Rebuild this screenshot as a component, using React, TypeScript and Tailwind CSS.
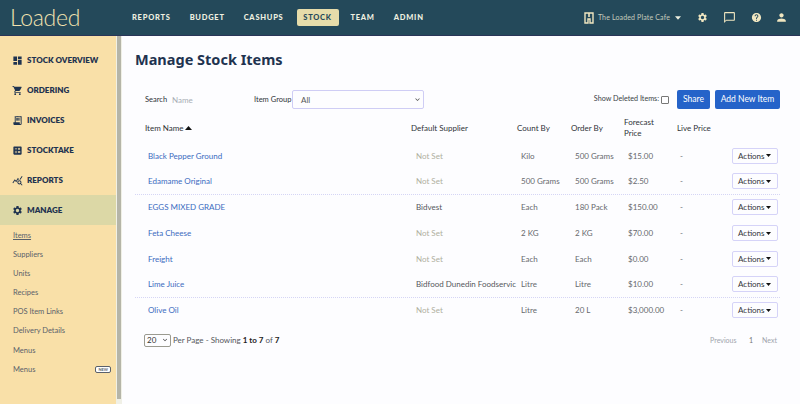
import { MdDashboard, MdShoppingCart, MdSettings, MdChatBubbleOutline, MdHelp, MdPerson, MdCalculate, MdReceiptLong, MdQueryStats, MdKeyboardArrowDown } from "react-icons/md";

const TOP_NAV = [
  { label: "REPORTS", cls: "ml-[8px]" },
  { label: "BUDGET", cls: "ml-[19px]" },
  { label: "CASHUPS", cls: "ml-[19px]" },
  { label: "STOCK", cls: "ml-[13px]" },
  { label: "TEAM", cls: "ml-[12px]" },
  { label: "ADMIN", cls: "ml-[19px]" },
];

const SIDE_NAV = [
  { label: "STOCK OVERVIEW", icon: MdDashboard },
  { label: "ORDERING", icon: MdShoppingCart },
  { label: "INVOICES", icon: MdReceiptLong },
  { label: "STOCKTAKE", icon: MdCalculate },
  { label: "REPORTS", icon: MdQueryStats },
];

const SUB_NAV = ["Items", "Suppliers", "Units", "Recipes", "POS Item Links", "Delivery Details", "Menus"];

const ROWS = [
  { name: "Black Pepper Ground", supplier: "Not Set", count: "Kilo", order: "500 Grams", price: "$15.00" },
  { name: "Edamame Original", supplier: "Not Set", count: "500 Grams", order: "500 Grams", price: "$2.50" },
  { name: "EGGS MIXED GRADE", supplier: "Bidvest", count: "Each", order: "180 Pack", price: "$150.00" },
  { name: "Feta Cheese", supplier: "Not Set", count: "2 KG", order: "2 KG", price: "$70.00" },
  { name: "Freight", supplier: "Not Set", count: "Each", order: "Each", price: "$0.00" },
  { name: "Lime Juice", supplier: "Bidfood Dunedin Foodservic", count: "Litre", order: "Litre", price: "$10.00" },
  { name: "Olive Oil", supplier: "Not Set", count: "Litre", order: "20 L", price: "$3,000.00" },
];

function Caret({ className }: { className: string }) {
  return (
    <svg viewBox="0 0 10 6" className={className} fill="currentColor">
      <path d="M0 0h10L5 6z" />
    </svg>
  );
}

function Header() {
  return (
    <header className="flex h-[36px] shrink-0 items-center border-b border-[#2a3558] bg-[#24495a]">
      <div className="ml-[10px] w-[114px] font-['Lato'] text-[23px] font-light leading-none tracking-[-0.3px] text-[#f3e3b0]">Loaded</div>
      <nav className="flex items-center font-['Lato'] text-[7.5px] font-black tracking-[0.75px]">
        {TOP_NAV.map(({ label, cls }) =>
          label === "STOCK" ? (
            <div key={label} className={`flex h-[17px] w-[42px] items-center justify-center rounded-[2px] bg-[#e6dcaa] text-[#24495a] ${cls}`}>{label}</div>
          ) : (
            <div key={label} className={`text-[#eef0e0] ${cls}`}>{label}</div>
          )
        )}
      </nav>
      <div className="ml-auto flex items-center text-[#f0e6c0]">
        <svg viewBox="0 0 10 12" className="h-[12px] w-[10px]" fill="none" stroke="currentColor">
          <path d="M1 1h8v10H6V7H4v4H1z" strokeWidth="1.4" />
          <path d="M5 1v4" strokeWidth="1.6" />
        </svg>
        <span className="ml-[4px] whitespace-nowrap font-['Lato'] text-[7px] tracking-[0.15px] text-[#c6cbbc]">The Loaded Plate Cafe</span>
        <Caret className="ml-[5px] h-[4px] w-[6px] text-[#eef0e0]" />
        <MdSettings className="ml-[16px] h-[11px] w-[11px]" />
        <MdChatBubbleOutline className="ml-[15px] h-[13px] w-[13px]" />
        <MdHelp className="ml-[15px] h-[11px] w-[11px]" />
        <MdPerson className="ml-[13px] mr-[12px] h-[13px] w-[13px]" />
      </div>
    </header>
  );
}

function Sidebar() {
  return (
    <aside className="flex w-[122px] shrink-0 bg-[#f0f0e6]">
      <div className="w-[116px] bg-[#f9e0a8] pt-[9px]">
        {SIDE_NAV.map(({ label, icon: Icon }) => (
          <div key={label} className="flex h-[30px] items-center pl-[12px] text-[#1f3350]">
            <Icon className="h-[11px] w-[11px]" />
            <span className="ml-[4px] font-['Lato'] text-[8px] font-extrabold">{label}</span>
          </div>
        ))}
        <div className="flex h-[30px] items-center bg-[#dcd8a6] pl-[12px] text-[#1f3350]">
          <MdSettings className="h-[11px] w-[11px]" />
          <span className="ml-[4px] font-['Lato'] text-[8px] font-extrabold">MANAGE</span>
        </div>
        <div className="pl-[13px] pt-[1px]">
          {SUB_NAV.map((item, i) => (
            <div key={item} className={`h-[19.1px] font-['Lato'] text-[7.5px] leading-[19px] text-[#59606a] ${i === 0 ? "underline" : ""}`}>{item}</div>
          ))}
          <div className="flex h-[19px] items-center justify-between pr-[5px] font-['Lato'] text-[7.5px] text-[#59606a]">
            <span>Menus</span>
            <span className="rounded-[2px] border border-[#59606a] bg-white px-[2px] text-[4px] font-bold leading-[5px]">NEW</span>
          </div>
        </div>
      </div>
      <div className="ml-[1px] mb-[5px] w-[4px] bg-[#b5b5a8]" />
    </aside>
  );
}

function Main() {
  return (
    <main className="min-w-0 flex-1 bg-[#fdfdff] pl-[13px] pr-[20px] font-['Lato'] text-[8px] text-[#3a3f45]">
      <h1 className="mt-[11px] h-[24px] font-['Noto_Sans'] text-[14.5px] font-bold leading-[24px] text-[#1f3350]">Manage Stock Items</h1>
      <div className="mt-[19px] flex h-[19px] items-center pl-[10px]">
        <span className="w-[27px] text-[7.5px] text-[#2f3338]">Search</span>
        <span className="w-[82px] text-[#a8adb5]">Name</span>
        <span className="w-[38px] whitespace-nowrap text-[7.5px] text-[#2f3338]">Item Group</span>
        <div className="flex h-[19px] w-[132px] items-center justify-between rounded-[2px] border border-[#cfcdf5] pl-[8px] pr-[1px] text-[#555]">
          <span>All</span>
          <MdKeyboardArrowDown className="h-[9px] w-[9px]" />
        </div>
        <span className="ml-auto whitespace-nowrap text-[7.2px]">Show Deleted Items:</span>
        <span className="ml-[2px] h-[8px] w-[8px] rounded-[1px] border border-[#777]" />
        <div className="ml-[8px] flex h-[19px] w-[33px] items-center justify-center rounded-[2px] bg-[#2563c9] text-[8.5px] text-white">Share</div>
        <div className="ml-[5px] flex h-[19px] w-[65px] items-center justify-center rounded-[2px] bg-[#2563c9] text-[8.5px] text-white">Add New Item</div>
      </div>
      <div className="mt-[6px] grid h-[25px] grid-cols-[266px_106px_54px_53px_53px_1fr] items-center pl-[10px] text-[#2f3338]">
        <div className="flex items-center">Item Name<Caret className="ml-[1px] h-[6px] w-[7px] rotate-180 text-[#111]" /></div>
        <div>Default Supplier</div>
        <div>Count By</div>
        <div>Order By</div>
        <div className="leading-[11px]">Forecast<br />Price</div>
        <div>Live Price</div>
      </div>
      <div className="mt-[3px]">
        {ROWS.map((row, i) => (
          <div key={row.name} className={`grid h-[25.75px] grid-cols-[266px_106px_54px_53px_53px_52px_1fr] items-center pl-[13px] pr-[2px] ${i === 1 || i === 5 ? "border-b border-dotted border-[#d5d5f5]" : ""}`}>
            <div className="text-[#3a6bc0]">{row.name}</div>
            <div className={`overflow-hidden whitespace-nowrap pl-[2px] ${row.supplier === "Not Set" ? "text-[#b0b0a0]" : "text-[#55585c]"}`}>{row.supplier}</div>
            <div className="pl-[1px] text-[#66696d]">{row.count}</div>
            <div className="pl-[1px] text-[#66696d]">{row.order}</div>
            <div className="pl-[1px] text-[#66696d]">{row.price}</div>
            <div className="text-[#66696d]">-</div>
            <div className="flex h-[16px] w-[46px] items-center justify-between justify-self-end rounded-[2px] border border-[#d5d3f8] pl-[5px] pr-[6px] text-[#33363a]">
              <span>Actions</span>
              <Caret className="h-[3px] w-[5px] text-[#111]" />
            </div>
          </div>
        ))}
      </div>
      <div className="mt-[9px] flex h-[16px] items-center pl-[9px]">
        <div className="flex h-[13px] w-[27px] items-center justify-between rounded-[2px] border border-[#9a9a90] pl-[2px] pr-[1px] text-[#333]">
          <span>20</span>
          <MdKeyboardArrowDown className="h-[8px] w-[8px]" />
        </div>
        <span className="ml-[2px] text-[#55585c]">Per Page - Showing <b className="text-[#222]">1 to 7</b> of <b className="text-[#222]">7</b></span>
        <div className="ml-auto flex items-center pr-[3px] text-[7px] text-[#a0a4ad]">
          <span className="w-[30px]">Previous</span>
          <span className="w-[22px] text-center text-[#777]">1</span>
          <span>Next</span>
        </div>
      </div>
    </main>
  );
}

export default function App() {
  return (
    <div className="flex h-[404px] w-[800px] flex-col overflow-hidden">
      <Header />
      <div className="flex min-h-0 flex-1">
        <Sidebar />
        <Main />
      </div>
    </div>
  );
}
